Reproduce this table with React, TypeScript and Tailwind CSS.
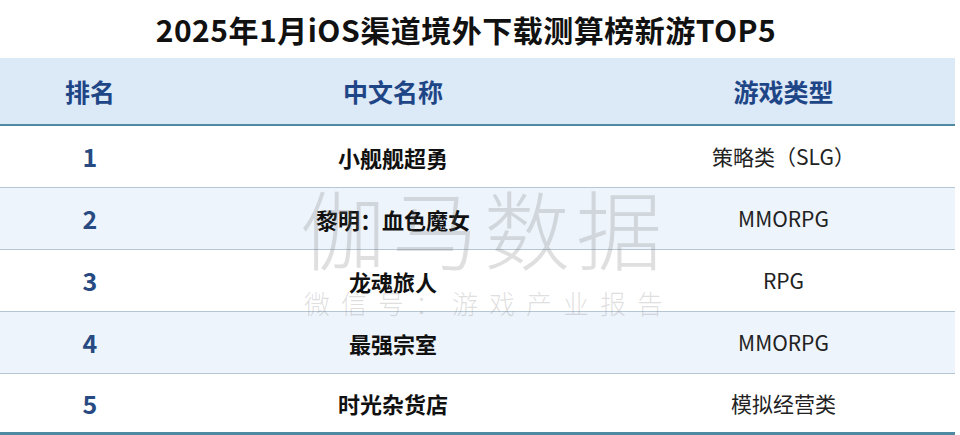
const rows = [
  { rank: '1', name: '小舰舰超勇', type: '策略类（SLG）' },
  { rank: '2', name: '黎明：血色魔女', type: 'MMORPG' },
  { rank: '3', name: '龙魂旅人', type: 'RPG' },
  { rank: '4', name: '最强宗室', type: 'MMORPG' },
  { rank: '5', name: '时光杂货店', type: '模拟经营类' },
];

const font = "font-['Noto_Sans_CJK_SC','Noto_Sans',sans-serif]";

export default function App() {
  return (
    <div className={`relative w-[960px] h-[435px] overflow-hidden bg-white ${font}`}>
      <div className="h-[58px] flex items-center justify-center pr-[28px]">
        <h1 className="text-[30px] font-bold text-[#111] leading-none tracking-[0.5px]">2025年1月iOS渠道境外下载测算榜新游TOP5</h1>
      </div>

      <div className="w-[955px]">
        {/* 表头 */}
        <div className="grid grid-cols-[180px_426px_349px] h-[68px] bg-[#dce9f7] border-b-2 border-[#4f8aa3] text-[25px] font-bold text-[#1e4687] leading-none">
          <div className="flex items-center justify-center">排名</div>
          <div className="flex items-center justify-center">中文名称</div>
          <div className="flex items-center justify-center pl-[6px]">游戏类型</div>
        </div>

        {rows.map((r, i) => (
          <div
            key={r.rank}
            className={
              'grid grid-cols-[180px_426px_349px] leading-none ' +
              (i % 2 === 1 ? 'bg-[#eef4fb] ' : 'bg-white ') +
              (i === rows.length - 1 ? 'h-[61px] border-b-[3px] border-[#4f8aa3]' : 'h-[62px] border-b border-[#b7c6d3]')
            }
          >
            <div className="flex items-center justify-center text-[25px] font-bold text-[#274a82]">{r.rank}</div>
            <div className="flex items-center justify-center text-[22px] font-bold text-[#111]">{r.name}</div>
            <div className="flex items-center justify-center pl-[6px] text-[21px] text-[#222]">{r.type}</div>
          </div>
        ))}
      </div>

      {/* 水印 */}
      <div className="absolute left-[300px] top-[184px] pointer-events-none select-none text-[rgba(110,110,110,0.22)]">
        <div className="text-[86px] leading-none tracking-[6px] font-light">伽马数据</div>
        <div className="mt-[20px] ml-[4px] text-[26px] leading-none tracking-[11px] font-light">微信号：游戏产业报告</div>
      </div>
    </div>
  );
}
